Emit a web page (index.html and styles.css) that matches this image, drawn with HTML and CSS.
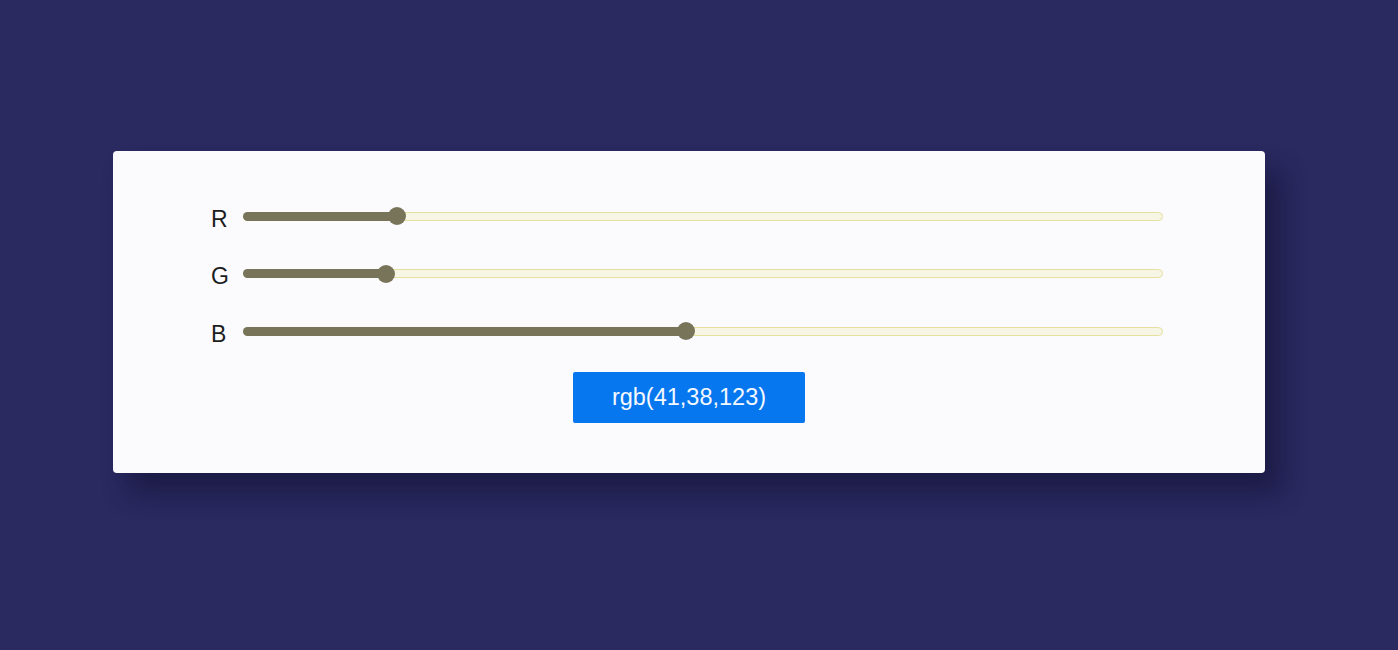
FILE: index.html
```html
<!DOCTYPE html>
<html>
<head>
<meta charset="utf-8">
<link rel="stylesheet" href="styles.css">
</head>
<body>
<div class="page">
  <div class="card">
    <div class="rows">
      <div class="row">
        <span class="label">R</span>
        <div class="track"><div class="fill" style="width: calc(9px + 0.1608 * (100% - 18px))"><span class="thumb"></span></div></div>
      </div>
      <div class="row">
        <span class="label">G</span>
        <div class="track"><div class="fill" style="width: calc(9px + 0.149 * (100% - 18px))"><span class="thumb"></span></div></div>
      </div>
      <div class="row">
        <span class="label">B</span>
        <div class="track"><div class="fill" style="width: calc(9px + 0.4824 * (100% - 18px))"><span class="thumb"></span></div></div>
      </div>
    </div>
    <div class="actions">
      <button class="btn">rgb(41,38,123)</button>
    </div>
  </div>
</div>
</body>
</html>
```
FILE: styles.css
```css
html, body {
  margin: 0;
  padding: 0;
}
body {
  background: #2a2960;
  font-family: "Liberation Sans", Arial, sans-serif;
  height: 650px;
  overflow: hidden;
}
.page {
  padding: 151px 0 0 113px;
}
.card {
  width: 1152px;
  box-sizing: border-box;
  background: #fbfbfe;
  border-radius: 4px;
  padding: 53px 102px 50px 98px;
  box-shadow: 16px 20px 26px rgba(12, 12, 40, 0.45);
}
.rows {
  display: flex;
  flex-direction: column;
  gap: 33.5px;
}
.row {
  display: flex;
  align-items: center;
  height: 24px;
}
.label {
  width: 32px;
  font-size: 23px;
  color: #1c1c1c;
  line-height: 24px;
  padding-top: 5px;
}
.track {
  flex: 1;
  position: relative;
  height: 7px;
  border: 1px solid #e4e1a0;
  background: #f7f6e4;
  border-radius: 5px;
}
.fill {
  position: relative;
  height: 9px;
  margin: -1px 0 0 -1px;
  background: #78745a;
  border-radius: 5px 0 0 5px;
}
.thumb {
  position: absolute;
  right: -9px;
  top: 50%;
  width: 18px;
  height: 18px;
  margin-top: -9px;
  border-radius: 50%;
  background: #78745a;
}
.actions {
  display: flex;
  justify-content: center;
  margin-top: 29px;
  padding-left: 4px;
}
.btn {
  width: 232px;
  height: 51px;
  border: none;
  border-radius: 2px;
  background: #0677ee;
  color: #f4f8ff;
  font-family: "Liberation Sans", Arial, sans-serif;
  font-size: 23.5px;
  padding: 0;
}
```
